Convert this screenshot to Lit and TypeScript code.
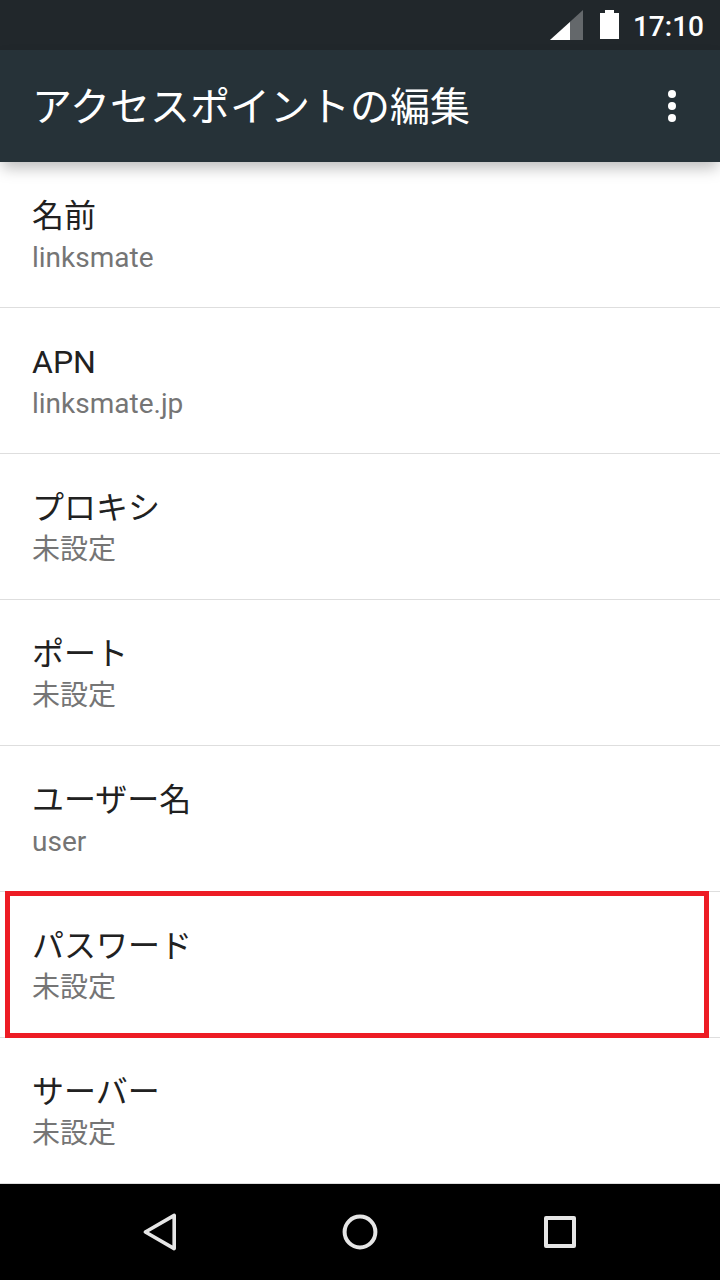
import { LitElement, html, css } from "lit";
import { customElement, state } from "lit/decorators.js";
import { classMap } from "lit/directives/class-map.js";

interface Setting {
  label: string;
  value: string;
  marked?: boolean;
}

@customElement("app-root")
export class AppRoot extends LitElement {
  static styles = css`
    :host {
      display: flex;
      flex-direction: column;
      min-height: 100vh;
      background: #fff;
      color: #212121;
      font-family: Roboto, "Noto Sans CJK JP", sans-serif;
    }
    * {
      box-sizing: border-box;
    }
    button {
      margin: 0;
      padding: 0;
      border: 0;
      background: none;
      color: inherit;
      font: inherit;
      cursor: pointer;
    }
    svg {
      display: block;
    }
    .status {
      display: flex;
      align-items: center;
      justify-content: flex-end;
      gap: 14px;
      height: 50px;
      padding-right: 16px;
      background: #21272b;
      color: #fff;
      font-size: 28px;
      font-weight: 500;
      line-height: 32px;
    }
    .status time {
      padding-top: 4px;
    }
    .indicators {
      display: flex;
      gap: 16px;
    }
    .bar {
      position: relative;
      display: flex;
      align-items: center;
      justify-content: space-between;
      height: 112px;
      padding: 0 24px 0 32px;
      background: #263238;
      color: #fff;
      box-shadow: 0 8px 14px -2px rgba(0, 0, 0, 0.26);
    }
    .bar h1 {
      margin: 0;
      padding-top: 4px;
      font-size: 40px;
      font-weight: 400;
      line-height: 48px;
    }
    .list {
      flex: 1;
      margin: 0;
      padding: 0;
      list-style: none;
    }
    .item {
      position: relative;
      border-bottom: 1px solid #dedede;
    }
    .row {
      display: flex;
      flex-direction: column;
      gap: 2px;
      width: 100%;
      padding: 34px 32px 29px;
      text-align: left;
      line-height: 40px;
    }
    .label,
    .value {
      height: 40px;
    }
    .label {
      font-size: 32px;
    }
    .value {
      color: #757575;
      font-size: 28px;
    }
    .marked::after {
      content: "";
      position: absolute;
      inset: -1px 11px -1px 5px;
      border: 5px solid #ed1c24;
      pointer-events: none;
    }
    .nav {
      display: flex;
      justify-content: center;
      height: 96px;
      background: #000;
    }
    .key {
      display: flex;
      align-items: center;
      justify-content: center;
      width: 200px;
    }
  `;

  @state() private settings: Setting[] = [
    { label: "名前", value: "linksmate" },
    { label: "APN", value: "linksmate.jp" },
    { label: "プロキシ", value: "未設定" },
    { label: "ポート", value: "未設定" },
    { label: "ユーザー名", value: "user" },
    { label: "パスワード", value: "未設定", marked: true },
    { label: "サーバー", value: "未設定" },
  ];

  render() {
    return html`
      <div class="status">
        <div class="indicators">
          <svg width="34" height="30" viewBox="0 0 34 30" aria-hidden="true">
            <path d="M33 0V30H0Z" fill="#64686b" />
            <path d="M20 12V30H0Z" fill="#fff" />
          </svg>
          <svg width="19" height="30" viewBox="0 0 19 30" aria-hidden="true">
            <path d="M5 0H14V3H19V29H0V3H5Z" fill="#fff" />
          </svg>
        </div>
        <time>17:10</time>
      </div>
      <header class="bar">
        <h1>アクセスポイントの編集</h1>
        <button aria-label="その他">
          <svg width="48" height="48" viewBox="0 0 48 48" fill="#fff">
            <circle cx="24" cy="12" r="4" />
            <circle cx="24" cy="24" r="4" />
            <circle cx="24" cy="36" r="4" />
          </svg>
        </button>
      </header>
      <ul class="list">
        ${this.settings.map(
          (s) => html`
            <li class=${classMap({ item: true, marked: !!s.marked })}>
              <button class="row">
                <span class="label">${s.label}</span>
                <span class="value">${s.value}</span>
              </button>
            </li>
          `
        )}
      </ul>
      <nav class="nav">
        <button class="key" aria-label="戻る">
          <svg width="48" height="48" viewBox="0 0 48 48" fill="none" stroke="#e6e6e6" stroke-width="3.6" stroke-linejoin="round">
            <path d="M38.2 7.4V40.6L9.4 24Z" />
          </svg>
        </button>
        <button class="key" aria-label="ホーム">
          <svg width="48" height="48" viewBox="0 0 48 48" fill="none" stroke="#e6e6e6" stroke-width="4">
            <circle cx="24" cy="24" r="15.4" />
          </svg>
        </button>
        <button class="key" aria-label="履歴">
          <svg width="48" height="48" viewBox="0 0 48 48" fill="none" stroke="#e6e6e6" stroke-width="4" stroke-linejoin="round">
            <rect x="10" y="10" width="28" height="28" />
          </svg>
        </button>
      </nav>
    `;
  }
}
